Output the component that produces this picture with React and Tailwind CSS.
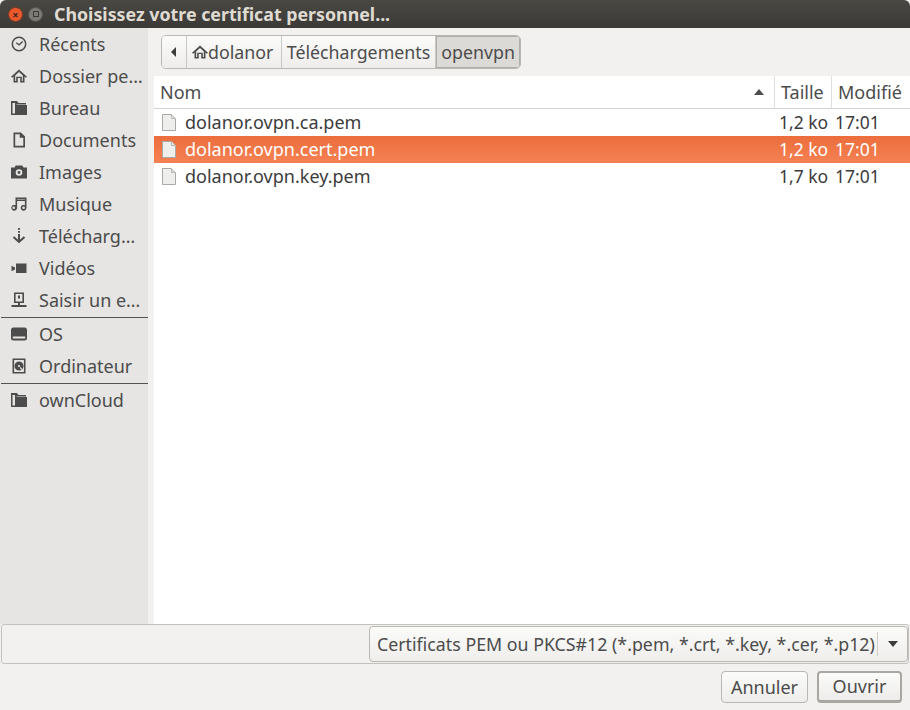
const ink = '#4c4c4c';

function SideIcon({ name }) {
  const props = { width: 16, height: 16, viewBox: '0 0 16 16', fill: ink };
  switch (name) {
    case 'recent':
      return (
        <svg {...props} fill="none" stroke={ink} strokeWidth="1.5">
          <circle cx="8" cy="8" r="6.700" />
          <path d="M5.200 6.800l2.800 2L11.800 5.500" strokeWidth="1.300" />
        </svg>
      );
    case 'home':
      return <svg {...props}><path fillRule="evenodd" d="M8 1.500L0 8.700l1.100 1.100L2.500 8.600V14.500h4.300V10h2.400v4.500h4.300V8.600l1.400 1.200L16 8.700zM4.200 13V7.500L8 4l3.800 3.500V13h-1V8.700H5.200V13z" /></svg>;
    case 'folder':
      return <svg {...props}><path fillRule="evenodd" d="M0 1h6l1.500 2H15V4.500H5.500V15H4V3H1.500v10.500H4V15H0z" /><path d="M5 5H16V15H5z" /></svg>;
    case 'doc':
      return <svg {...props}><path fillRule="evenodd" d="M2.500 .5H10L14 4.500V15.500H2.500zM4.200 2.200V13.800H12.300V5.800H8.700V2.200z" /></svg>;
    case 'image':
      return <svg {...props}><path fillRule="evenodd" d="M0 3.500h3.500l1.200-2h6.600l1.200 2H16V14.500H0zM8 5.200a3.300 3.300 0 100 6.600 3.300 3.300 0 000-6.600zm0 1.900a1.400 1.400 0 110 2.800 1.400 1.400 0 010-2.800z" /></svg>;
    case 'music':
      return <svg {...props}><path fillRule="evenodd" d="M4.500 1.500H15.500V11.800a2.900 2.900 0 11-1.600-2.600V5H6.100v6.800a2.900 2.900 0 11-1.600-2.600zM6.100 3V3.600H13.900V3zM2.700 10.500a1.300 1.300 0 100 2.600 1.300 1.300 0 000-2.600zm9.900 0a1.300 1.300 0 100 2.600 1.300 1.300 0 000-2.600z" /></svg>;
    case 'download':
      return (
        <svg {...props}>
          <path d="M7 0h2v1.800H7zM7 3h2v1.800H7zM7 6h2v7H7z" />
          <path d="M2.500 9l5.500 5 5.500-5" fill="none" stroke={ink} strokeWidth="2" />
        </svg>
      );
    case 'video':
      return <svg {...props}><path d="M5 3.500H15.500V13H5zM.5 5.800l3.500 1.700v2L.5 11.200z" /></svg>;
    case 'network':
      return <svg {...props}><path fillRule="evenodd" d="M3 .5H13V11H9V13H15.500V15H.5V13H7V11H3zM4.600 2.100V9.400H11.400V2.100zM7 3.500H9V6.500H7z" /></svg>;
    case 'disk':
      return <svg {...props}><path fillRule="evenodd" d="M2.500 1.500h11A2.500 2.500 0 0116 4v8a2.500 2.500 0 01-2.500 2.500h-11A2.500 2.500 0 010 12V4a2.500 2.500 0 012.500-2.500zM1.800 10.500V12.500H14.200V10.500z" /></svg>;
    case 'computer':
      return <svg {...props}><path fillRule="evenodd" d="M1.500 .5H14.500V15.500H1.500zM3.100 2.100V13.900H12.900V2.100zM8 3.500a4.500 4.500 0 110 9 4.500 4.500 0 010-9zm0 3.400a1.100 1.100 0 100 2.200 1.100 1.100 0 000-2.200zM8.700 9.700l1.800 2.300 1-.8-2-2.200z" /></svg>;
    default:
      return null;
  }
}

function SideItem({ icon, label }) {
  return (
    <div className="h-8 flex items-center pl-[11px] shrink-0">
      <div className="w-4 h-4 shrink-0"><SideIcon name={icon} /></div>
      <span className="ml-3 text-[#4c4c4c] text-[18px]">{label}</span>
    </div>
  );
}

function FileIcon() {
  return (
    <svg width="16" height="17" viewBox="0 0 16 17" className="shrink-0">
      <path d="M1.500 .5H10.500L14.500 4.500V16.500H1.500z" fill="#eeeeec" stroke="#a9a9a6" />
      <path d="M10.500 .5V4.500H14.500" fill="#dededb" stroke="#b8b8b5" />
    </svg>
  );
}

function FileRow({ name, size, selected }) {
  return (
    <div className={`h-[27px] flex items-center text-[18px] ${selected ? 'bg-gradient-to-b from-[#ec6d3c] to-[#f58153] text-white' : 'text-[#3c3c3c]'}`}>
      <div className="w-[620px] flex items-center pl-[7px] shrink-0">
        <FileIcon />
        <span className="ml-[8px]">{name}</span>
      </div>
      <span className="w-[57px] pl-[5px] shrink-0 text-[17.500px]">{size}</span>
      <span className="pl-[4px] text-[17.500px]">17:01</span>
    </div>
  );
}

function PathSeg({ children, active, className = '' }) {
  return (
    <div className={`h-full flex items-center px-[5px] text-[17.800px] border-r border-[#c9c7c3] ${active ? 'bg-[#dcdad6]' : 'bg-gradient-to-b from-[#fbfbfa] to-[#eeedeb]'} ${className}`}>
      {children}
    </div>
  );
}

export default function App() {
  return (
    <div className="w-[910px] h-[710px] flex flex-col bg-[#f2f1f0] overflow-hidden font-['Noto_Sans',sans-serif]">
      {/* barre de titre */}
      <div className="h-[28px] shrink-0 flex items-center bg-gradient-to-b from-[#4a4843] to-[#3b3a36] rounded-t-[6px] pl-[8px]">
        <div className="w-[15px] h-[15px] rounded-full bg-[#e9592c] border border-[#7a3a22] flex items-center justify-center text-[#40241a] text-[11px] leading-none font-bold">×</div>
        <div className="w-[15px] h-[15px] ml-[5px] rounded-full bg-[#7d7b75] border border-[#55534e] flex items-center justify-center">
          <div className="w-[6px] h-[6px] border border-[#3c3b37]"></div>
        </div>
        <span className="ml-[11px] text-[#dfdbd2] font-bold text-[17.800px]">Choisissez votre certificat personnel...</span>
      </div>

      <div className="flex flex-1 min-h-0">
        {/* panneau latéral */}
        <div className="w-[148px] shrink-0 bg-[#e6e5e3] flex flex-col">
          <SideItem icon="recent" label="Récents" />
          <SideItem icon="home" label="Dossier pe…" />
          <SideItem icon="folder" label="Bureau" />
          <SideItem icon="doc" label="Documents" />
          <SideItem icon="image" label="Images" />
          <SideItem icon="music" label="Musique" />
          <SideItem icon="download" label="Télécharg…" />
          <SideItem icon="video" label="Vidéos" />
          <SideItem icon="network" label="Saisir un e…" />
          <div className="h-[2px] flex items-end pl-[1px] shrink-0"><div className="w-full h-px bg-[#55534f]"></div></div>
          <SideItem icon="disk" label="OS" />
          <SideItem icon="computer" label="Ordinateur" />
          <div className="h-[2px] flex items-end pl-[1px] shrink-0"><div className="w-full h-px bg-[#55534f]"></div></div>
          <SideItem icon="folder" label="ownCloud" />
        </div>

        {/* zone principale */}
        <div className="flex-1 min-w-0 flex flex-col pl-[6px]">
          <div className="h-[48px] shrink-0 pl-[7px] pt-[7px]">
            <div className="h-[34px] w-[360px] flex items-stretch rounded-[5px] border border-[#b9b7b2] overflow-hidden text-[#4c4c4c]">
              <PathSeg className="w-[25px] justify-center">
                <svg width="8" height="10" viewBox="0 0 8 10"><path d="M6 0v10L1 5z" fill="#3c3c3c" /></svg>
              </PathSeg>
              <PathSeg className="w-[95px]">
                <svg width="16" height="16" viewBox="0 0 16 16" fill={ink} className="shrink-0"><path fillRule="evenodd" d="M8 1.500L0 8.700l1.100 1.100L2.500 8.600V14.500h4.300V10h2.400v4.500h4.300V8.600l1.400 1.200L16 8.700zM4.200 13V7.500L8 4l3.800 3.500V13h-1V8.700H5.200V13z" /></svg>
                <span>dolanor</span>
              </PathSeg>
              <PathSeg className="w-[155px]">Téléchargements</PathSeg>
              <PathSeg active className="flex-1 border-r-0 shadow-[inset_0_0_0_1px_#b0aeaa]">openvpn</PathSeg>
            </div>
          </div>

          <div className="flex-1 min-h-0 bg-white flex flex-col">
            <div className="h-[33px] shrink-0 flex text-[18px] text-[#4c4c4c] border-b border-[#d5d3cf]">
              <div className="w-[621px] shrink-0 flex items-center justify-between pl-[6px] pr-[10px] border-r border-[#e0dedb]">
                <span>Nom</span>
                <svg width="10" height="6" viewBox="0 0 10 6"><path d="M5 0l5 6H0z" fill="#4c4c4c" /></svg>
              </div>
              <div className="w-[57px] shrink-0 flex items-center pl-[6px] border-r border-[#e0dedb]">Taille</div>
              <div className="flex-1 flex items-center pl-[6px]">Modifié</div>
            </div>
            <FileRow name="dolanor.ovpn.ca.pem" size="1,2 ko" />
            <FileRow name="dolanor.ovpn.cert.pem" size="1,2 ko" selected />
            <FileRow name="dolanor.ovpn.key.pem" size="1,7 ko" />
          </div>
        </div>
      </div>

      {/* filtre */}
      <div className="h-[40px] shrink-0 mx-[1px] flex items-center justify-end border border-[#c4c2bd] rounded-[3px]">
        <div className="h-[36px] w-[539px] flex items-center rounded-[4px] border border-[#b9b7b2] bg-gradient-to-b from-[#fbfbfa] to-[#efeeec] text-[#4c4c4c] text-[17.800px]">
          <span className="pl-[7px] whitespace-nowrap flex-1">Certificats PEM ou PKCS#12 (*.pem, *.crt, *.key, *.cer, *.p12)</span>
          <div className="h-[24px] w-[30px] shrink-0 border-l border-[#d0cec9] flex items-center justify-center">
            <svg width="10" height="6" viewBox="0 0 10 6"><path d="M0 0h10L5 6z" fill="#3c3c3c" /></svg>
          </div>
        </div>
      </div>

      {/* boutons */}
      <div className="h-[46px] shrink-0 flex items-center justify-end gap-[9px] pr-[8px] text-[18px] text-[#4c4c4c]">
        <button className="h-[32px] w-[87px] rounded-[4px] border border-[#b9b7b2] bg-gradient-to-b from-[#fbfbfa] to-[#eeedeb]">Annuler</button>
        <button className="h-[32px] w-[85px] rounded-[4px] border-2 border-b-[3px] border-[#a9a7a2] bg-gradient-to-b from-[#fbfbfa] to-[#eeedeb]">Ouvrir</button>
      </div>
    </div>
  );
}
